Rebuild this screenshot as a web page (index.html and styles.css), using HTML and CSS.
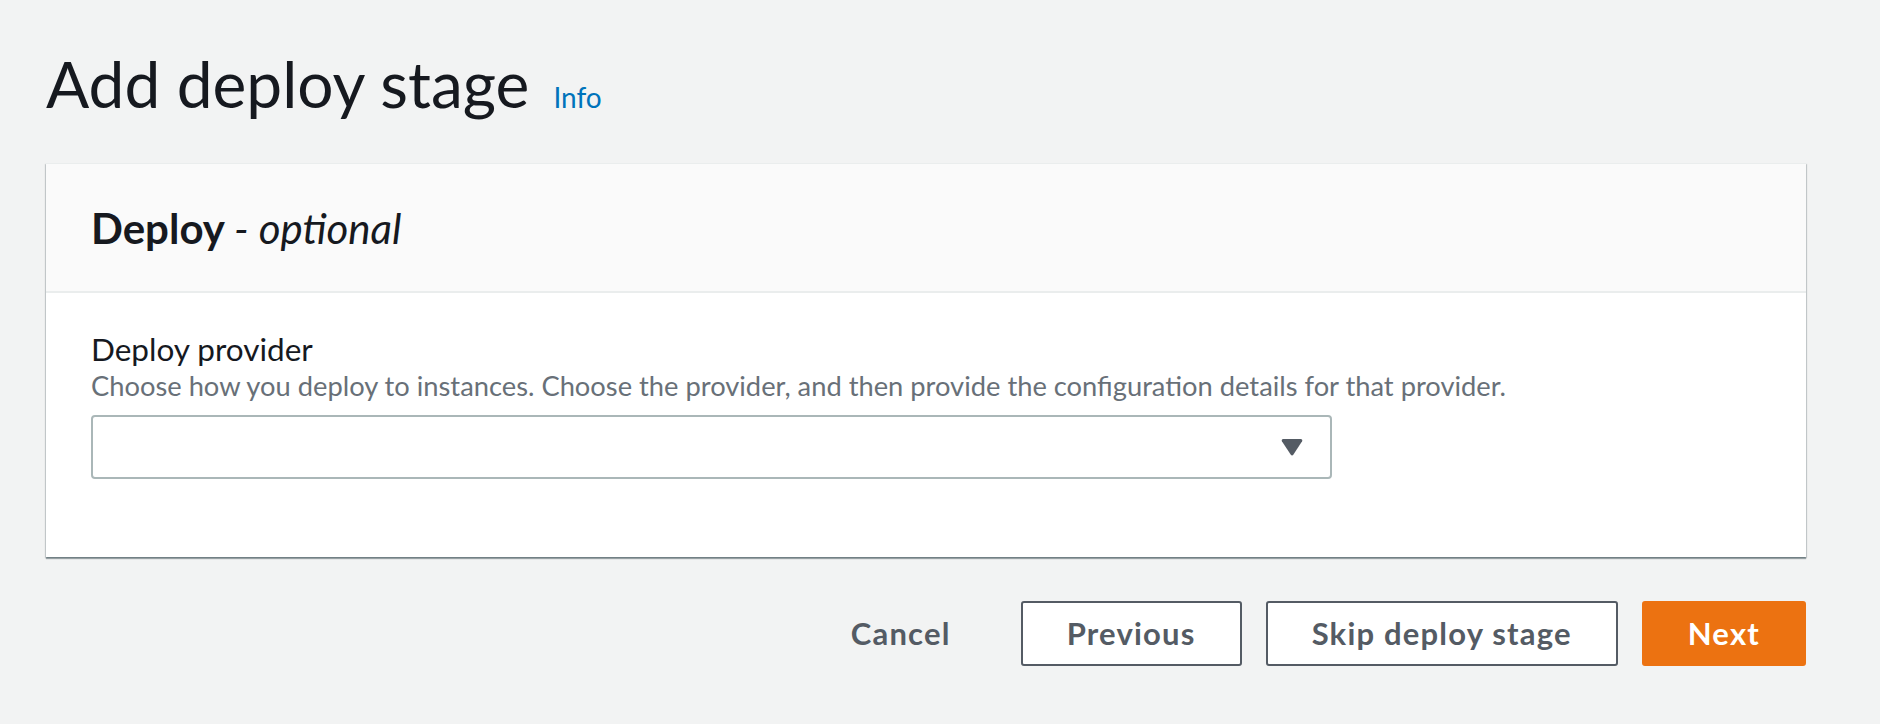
FILE: index.html
```html
<!DOCTYPE html>
<html lang="en">
<head>
<meta charset="utf-8">
<title>Add deploy stage</title>
<link rel="stylesheet" href="styles.css">
</head>
<body>
<main class="page">
  <div class="page-header">
    <h1 class="title">Add deploy stage</h1>
    <a class="info" href="#">Info</a>
  </div>
  <section class="card">
    <header class="card-header">
      <h2 class="card-title">Deploy <span class="optional">- optional</span></h2>
    </header>
    <div class="card-body">
      <div class="label">Deploy provider</div>
      <div class="desc">Choose how you deploy to instances. Choose the provider, and then provide the configuration details for that provider.</div>
      <div class="select">
        <svg class="caret" width="22" height="18" viewBox="0 0 22 18" aria-hidden="true">
          <path d="M2.2 1h17.6c1.2 0 1.9 1.3 1.3 2.3l-8.8 13.4c-.6.9-1.9.9-2.5 0L.9 3.3C.3 2.3 1 1 2.2 1z" fill="#545b64"/>
        </svg>
      </div>
    </div>
  </section>
  <div class="actions">
    <button class="btn btn-link">Cancel</button>
    <button class="btn btn-normal">Previous</button>
    <button class="btn btn-normal">Skip deploy stage</button>
    <button class="btn btn-primary">Next</button>
  </div>
</main>
</body>
</html>
```

FILE: styles.css
```css
html, body {
  margin: 0;
  padding: 0;
}
body {
  background: #f2f3f3;
  font-family: Lato, "Liberation Sans", sans-serif;
  color: #16191f;
}
.page {
  padding: 48px 74px 0 46px;
}
.page-header {
  display: flex;
  align-items: baseline;
  gap: 24px;
}
.title {
  margin: 0;
  font-size: 64px;
  line-height: 72px;
  font-weight: 400;
  color: #16191f;
}
.info {
  font-size: 28px;
  color: #0073bb;
  text-decoration: none;
}
.card {
  margin-top: 43px;
  background: #fff;
  border-top: 1px solid #eaeded;
  box-shadow: 0 2px 1px 0 rgba(0, 28, 36, 0.35), 1px 1px 1px 0 rgba(0, 28, 36, 0.15), -1px 1px 1px 0 rgba(0, 28, 36, 0.15);
}
.card-header {
  background: #fafafa;
  padding: 40px 45px 39px;
  border-bottom: 2px solid #eaeded;
}
.card-title {
  margin: 0;
  font-size: 42px;
  line-height: 48px;
  font-weight: 700;
}
.optional {
  font-weight: 400;
  font-style: italic;
}
.card-body {
  padding: 36px 45px 78px;
}
.label {
  font-size: 31.5px;
  line-height: 40px;
}
.desc {
  font-size: 27.3px;
  line-height: 34px;
  color: #687078;
}
.select {
  margin-top: 12px;
  width: 1241px;
  height: 64px;
  box-sizing: border-box;
  border: 2px solid #aab7b8;
  border-radius: 4px;
  background: #fff;
  display: flex;
  align-items: center;
  justify-content: flex-end;
  padding-right: 27px;
}
.caret {
  display: block;
}
.actions {
  margin-top: 44px;
  display: flex;
  justify-content: flex-end;
  gap: 24px;
}
.btn {
  font-family: Lato, "Liberation Sans", sans-serif;
  font-size: 31px;
  letter-spacing: 1.2px;
  font-weight: 700;
  line-height: 61px;
  height: 65px;
  padding: 0 44px;
  border: 2px solid transparent;
  border-radius: 3px;
  background: transparent;
  color: #545b64;
  cursor: pointer;
}
.btn-normal {
  background: #fff;
  border-color: #545b64;
}
.btn-primary {
  background: #ec7211;
  border-color: #ec7211;
  color: #fff;
}
```
